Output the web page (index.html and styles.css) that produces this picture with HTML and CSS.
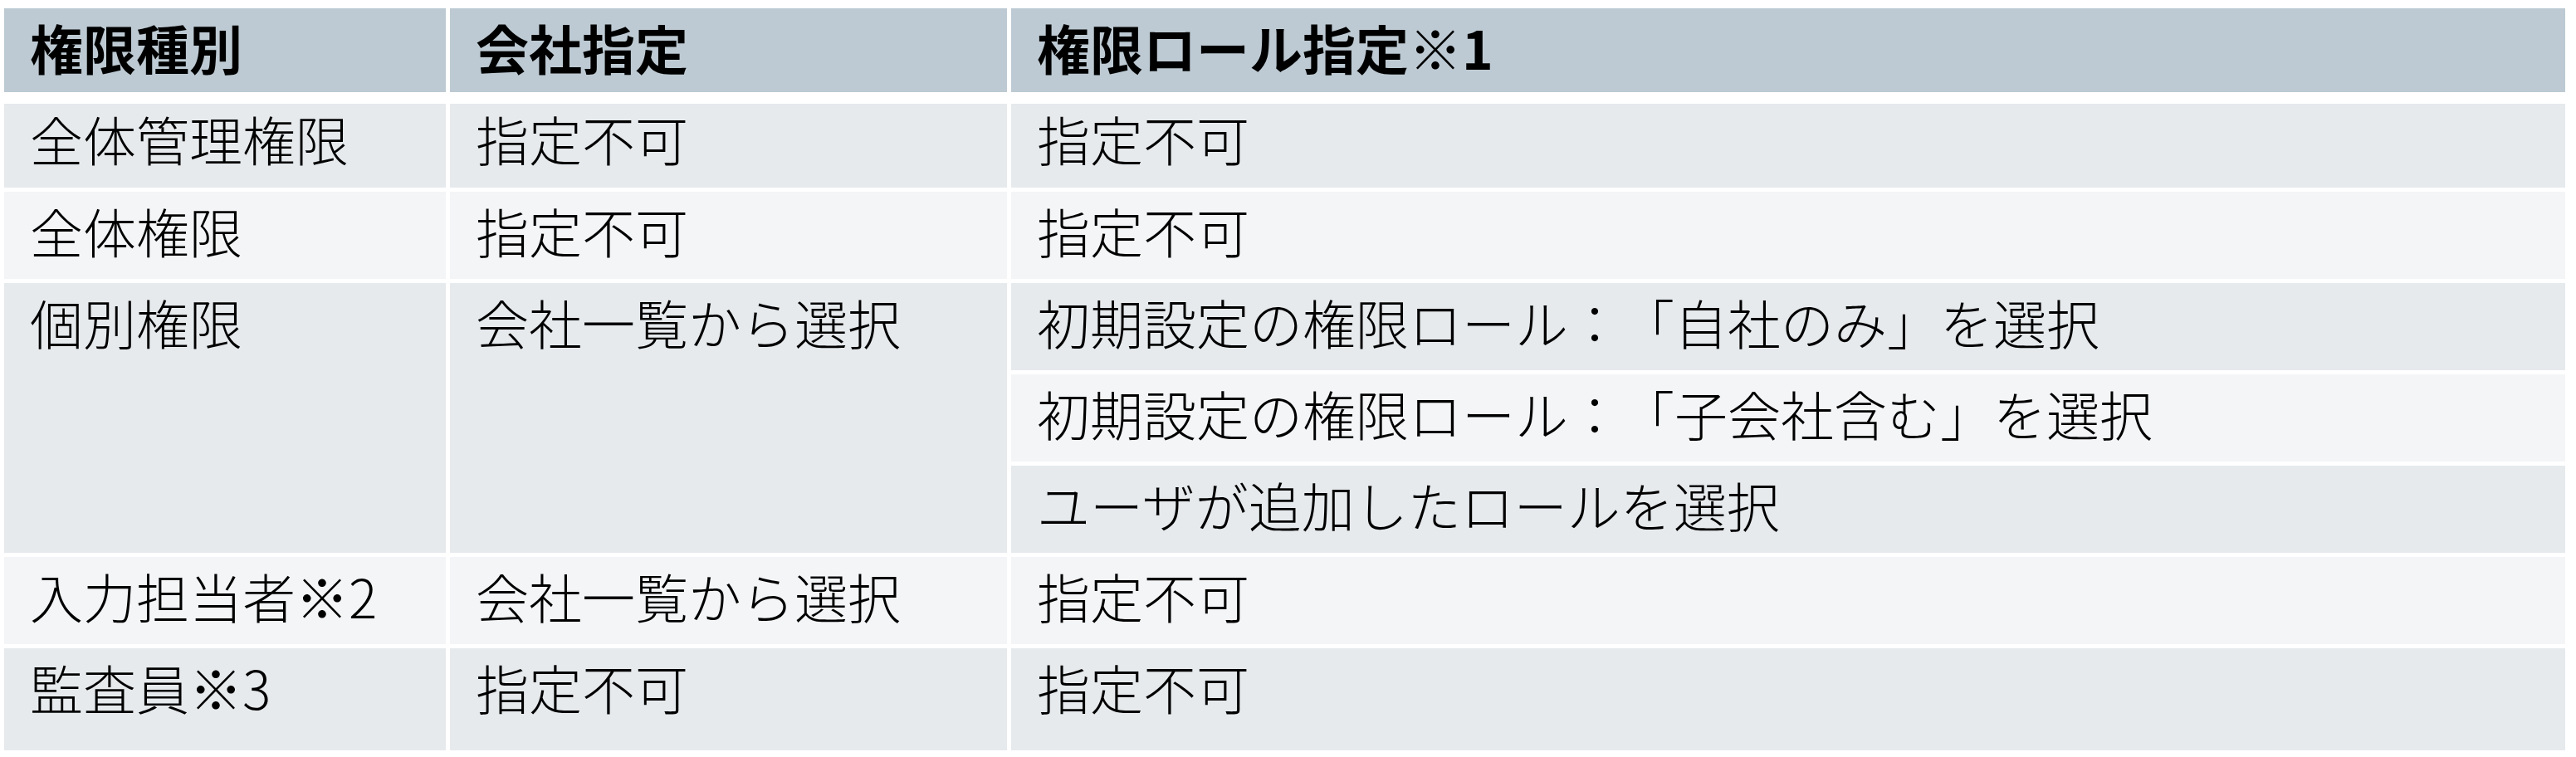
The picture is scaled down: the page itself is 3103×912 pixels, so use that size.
FILE: index.html
```html
<!DOCTYPE html>
<html lang="ja">
<head>
<meta charset="utf-8">
<title>権限種別</title>
<link rel="stylesheet" href="styles.css">
</head>
<body>
<div class="table">
  <div class="cell head">権限種別</div>
  <div class="cell head">会社指定</div>
  <div class="cell head">権限ロール指定※1</div>

  <div class="cell dark first">全体管理権限</div>
  <div class="cell dark first">指定不可</div>
  <div class="cell dark first">指定不可</div>

  <div class="cell light">全体権限</div>
  <div class="cell light">指定不可</div>
  <div class="cell light">指定不可</div>

  <div class="cell dark span3">個別権限</div>
  <div class="cell dark span3">会社一覧から選択</div>
  <div class="cell dark">初期設定の権限ロール：「自社のみ」を選択</div>
  <div class="cell light">初期設定の権限ロール：「子会社含む」を選択</div>
  <div class="cell dark">ユーザが追加したロールを選択</div>

  <div class="cell light">入力担当者※2</div>
  <div class="cell light">会社一覧から選択</div>
  <div class="cell light">指定不可</div>

  <div class="cell dark">監査員※3</div>
  <div class="cell dark">指定不可</div>
  <div class="cell dark">指定不可</div>
</div>
</body>
</html>
```

FILE: styles.css
```css
html, body {
  margin: 0;
  padding: 0;
  background: #ffffff;
}

body {
  font-family: "Noto Sans CJK JP", "Noto Sans", sans-serif;
  color: #000000;
}

.table {
  display: grid;
  grid-template-columns: 532px 671px 1872px;
  grid-template-rows: 110px 101px 105px 105px 105px 105px 105px 123px;
  column-gap: 5px;
  row-gap: 5px;
  margin: 10px 0 0 5px;
}

.cell {
  box-sizing: border-box;
  padding: 15px 0 0 31px;
  font-size: 64px;
  line-height: 63px;
  font-weight: 300;
  white-space: nowrap;
  text-spacing-trim: space-all;
  font-feature-settings: "palt" 0, "halt" 0;
}

.head {
  background: #bdcad3;
  font-weight: 700;
  margin-bottom: 9px;
}

.first {
  padding-top: 10px;
}

.dark {
  background: #e6eaed;
}

.light {
  background: #f3f5f7;
}

.span3 {
  grid-row: span 3;
}
```
